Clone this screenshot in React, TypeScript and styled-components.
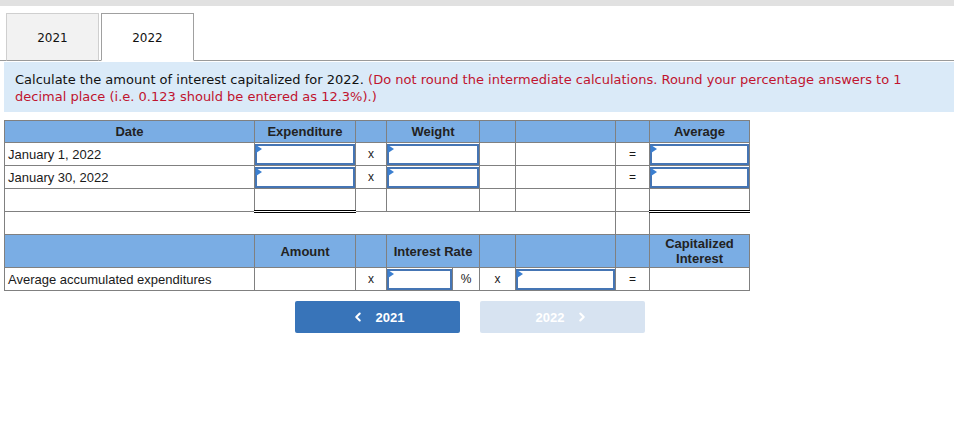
import React from 'react';
import styled, { createGlobalStyle } from 'styled-components';
import { ChevronLeft, ChevronRight } from 'lucide-react';

const Global = createGlobalStyle`
  body {
    margin: 0;
    background: #fff;
    font-family: "Liberation Sans", Arial, sans-serif;
  }
`;

const Page = styled.div`
  width: 954px;
`;

const TopBand = styled.div`
  height: 6px;
  background: #e1e1e1;
`;

const TabBar = styled.div`
  display: flex;
  gap: 2px;
  margin-top: 7px;
  padding-left: 6px;
  border-bottom: 1px solid #9a9a9a;
`;

const Tab = styled.div<{ $active?: boolean }>`
  width: 93px;
  height: 48px;
  box-sizing: border-box;
  padding-top: 2px;
  display: flex;
  align-items: center;
  justify-content: center;
  font-family: "DejaVu Sans", Verdana, sans-serif;
  font-size: 12px;
  color: #111;
  background: ${(p) => (p.$active ? '#fff' : '#f2f2f2')};
  border: 1px solid ${(p) => (p.$active ? '#a0a0a0' : '#cfcfcf')};
  border-bottom: 1px solid ${(p) => (p.$active ? '#fff' : '#9a9a9a')};
  margin-bottom: -1px;
`;

const Instructions = styled.div`
  margin: 1px 0 0 4px;
  height: 50px;
  box-sizing: border-box;
  padding: 9px 11px;
  background: #daeaf8;
  font-family: "DejaVu Sans", Verdana, sans-serif;
  font-size: 13px;
  line-height: 17px;
  color: #111;
`;

const Hint = styled.span`
  color: #c0142f;
`;

const Grid = styled.table`
  margin: 8px 0 0 4px;
  border-collapse: collapse;
  table-layout: fixed;
  width: 746px;
  font-size: 13px;
  color: #1a1a1a;
`;

const Head = styled.td`
  background: #7aade4;
  border: 1px solid #808080;
  font-weight: bold;
  text-align: center;
  color: #222;
  line-height: 15px;
  padding: 0;
`;

const Cell = styled.td<{ $align?: 'left' | 'center'; $total?: boolean; $open?: boolean }>`
  border: 1px solid #808080;
  padding: ${(p) => (p.$align === 'left' ? '0 3px' : '0')};
  text-align: ${(p) => p.$align ?? 'center'};
  font-size: ${(p) => (p.$align === 'left' ? '13px' : '12px')};
  ${(p) =>
    p.$total &&
    `
    border-top: 1px solid #000;
    border-bottom: 3px double #000;
  `}
  ${(p) =>
    p.$open &&
    `
    border-right: none;
    border-bottom: none;
  `}
`;

const Field = styled.div`
  position: relative;
  height: 21px;
  box-sizing: border-box;
  border: 2px solid #4575b4;
  background: #fff;

  &::before {
    content: '';
    position: absolute;
    top: -1px;
    left: -1px;
    border-top: 4px solid transparent;
    border-bottom: 4px solid transparent;
    border-left: 6px solid #3b7fd0;
  }
`;

const Row = styled.tr<{ $h: number }>`
  height: ${(p) => p.$h}px;
`;

const Nav = styled.div`
  width: 940px;
  display: flex;
  justify-content: center;
  gap: 20px;
  margin-top: 10px;
`;

const NavButton = styled.button<{ $disabled?: boolean }>`
  width: 165px;
  height: 32px;
  border: none;
  border-radius: 2px;
  background: ${(p) => (p.$disabled ? '#d7e3f1' : '#3874b9')};
  color: #fff;
  font-family: "Liberation Sans", Arial, sans-serif;
  font-size: 13px;
  font-weight: bold;
  display: flex;
  align-items: center;
  justify-content: center;
  gap: 11px;
  padding: 0;
`;

const dates = ['January 1, 2022', 'January 30, 2022'];

export default function App() {
  return (
    <Page>
      <Global />
      <TopBand />
      <TabBar>
        <Tab>2021</Tab>
        <Tab $active>2022</Tab>
      </TabBar>
      <Instructions>
        Calculate the amount of interest capitalized for 2022.{' '}
        <Hint>
          (Do not round the intermediate calculations. Round your percentage answers to 1 decimal place (i.e. 0.123
          should be entered as 12.3%).)
        </Hint>
      </Instructions>

      <Grid>
        <colgroup>
          <col style={{ width: 250 }} />
          <col style={{ width: 101 }} />
          <col style={{ width: 31 }} />
          <col style={{ width: 66 }} />
          <col style={{ width: 27 }} />
          <col style={{ width: 36 }} />
          <col style={{ width: 100 }} />
          <col style={{ width: 34 }} />
          <col style={{ width: 100 }} />
        </colgroup>
        <tbody>
          <Row $h={22}>
            <Head>Date</Head>
            <Head>Expenditure</Head>
            <Head />
            <Head colSpan={2}>Weight</Head>
            <Head />
            <Head />
            <Head />
            <Head>Average</Head>
          </Row>
          {dates.map((d) => (
            <Row $h={23} key={d}>
              <Cell $align="left">{d}</Cell>
              <Cell><Field /></Cell>
              <Cell>x</Cell>
              <Cell colSpan={2}><Field /></Cell>
              <Cell />
              <Cell />
              <Cell>=</Cell>
              <Cell><Field /></Cell>
            </Row>
          ))}
          <Row $h={23}>
            <Cell />
            <Cell $total />
            <Cell />
            <Cell colSpan={2} />
            <Cell />
            <Cell />
            <Cell />
            <Cell $total />
          </Row>
          <Row $h={23}>
            <Cell colSpan={7} />
            <Cell />
            <Cell $open />
          </Row>
          <Row $h={33}>
            <Head />
            <Head>Amount</Head>
            <Head />
            <Head colSpan={2}>Interest Rate</Head>
            <Head />
            <Head />
            <Head />
            <Head>
              Capitalized
              <br />
              Interest
            </Head>
          </Row>
          <Row $h={23}>
            <Cell $align="left">Average accumulated expenditures</Cell>
            <Cell />
            <Cell>x</Cell>
            <Cell><Field /></Cell>
            <Cell>%</Cell>
            <Cell>x</Cell>
            <Cell><Field /></Cell>
            <Cell>=</Cell>
            <Cell />
          </Row>
        </tbody>
      </Grid>

      <Nav>
        <NavButton>
          <ChevronLeft size={14} strokeWidth={3.5} />
          2021
        </NavButton>
        <NavButton $disabled>
          2022
          <ChevronRight size={14} strokeWidth={3.5} />
        </NavButton>
      </Nav>
    </Page>
  );
}
